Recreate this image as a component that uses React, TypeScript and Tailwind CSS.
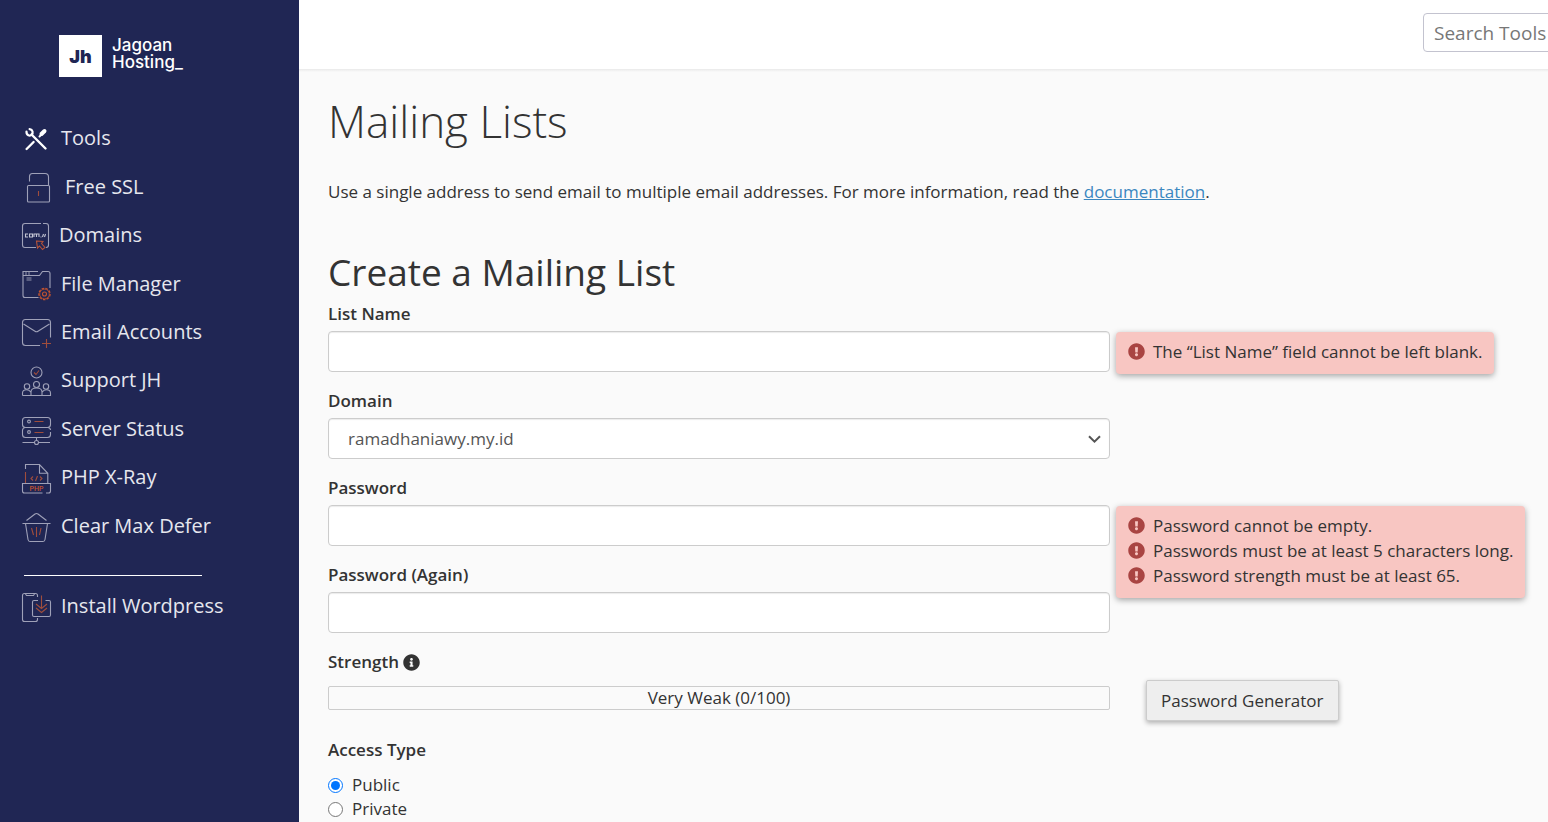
import type { ReactNode } from "react";
import { FaExclamationCircle, FaInfoCircle } from "react-icons/fa";

type NavItem = {
  label: string;
  icon: ReactNode;
};

const line = "#9fa1b8";
const accent = "#a04d3c";

function Icon({ width = 30, children }: { width?: number; children: ReactNode }) {
  return (
    <svg
      width={width}
      height="32"
      viewBox={`0 0 ${width} 32`}
      fill="none"
      stroke={line}
      strokeWidth="1.1"
      className="shrink-0 overflow-visible"
      aria-hidden="true"
    >
      {children}
    </svg>
  );
}

const navItems: NavItem[] = [
  {
    label: "Tools",
    icon: (
      <Icon>
        <g stroke="#fff" strokeLinecap="round">
          <path d="M9.5 12.5L23.5 26.5" strokeWidth="2.4" />
          <path d="M4.6 27L11.6 20" strokeWidth="2.4" />
          <path d="M17.5 14.5L19.5 12.5" strokeWidth="2" />
          <path d="M19.5 12L22.5 9" strokeWidth="4" />
          <path d="M4.5 9.5C4.3 13.5 8 14.6 9.6 12.6C11.4 11 11 7.6 7.6 7.2" strokeWidth="2.2" />
        </g>
      </Icon>
    ),
  },
  {
    label: "Free SSL",
    icon: (
      <Icon width={34}>
        <path d="M7.5 10.5V5.5Q7.5 2.5 10.5 2.5H23Q26.5 2.5 26.5 6V14" />
        <rect x="5.5" y="14.5" width="22" height="16.5" rx="1" />
        <path d="M16.5 20V25" stroke={accent} />
      </Icon>
    ),
  },
  {
    label: "Domains",
    icon: (
      <Icon width={28}>
        <path d="M19 4.5H3Q0.5 4.5 0.5 7V26Q0.5 28.5 3 28.5H14M21 4.5H24Q26.5 4.5 26.5 7V26Q26.5 28.5 24 28.5" />
        <path
          d="M6 15H3.5V18H6M7.5 15H10.5V18H7.5ZM12 18V15H17V18M14.5 15V18M18.5 18H19.5M20.5 18L21.5 15M22.5 18L23.5 15"
          stroke="#c3c5d4"
        />
        <path d="M14.5 22L21 22.5L19.5 24.5L23 28.5L20.5 30.5L17.5 27L15.5 29Z" stroke="#b5533a" />
      </Icon>
    ),
  },
  {
    label: "File Manager",
    icon: (
      <Icon>
        <path d="M16.5 29.5H3Q1 29.5 1 27.5V3.5H16M28 20V5.5Q28 3.5 26 3.5H20.5L17.5 7.5H1" />
        <path d="M4 3.5V7M7 3.5V7M4.5 10H9.5M4.5 12H9.5" strokeWidth="0.9" />
        <g stroke="#c4532f">
          <circle cx="22.5" cy="26" r="5.6" strokeDasharray="2.6 1.2" strokeWidth="1.3" />
          <circle cx="22.5" cy="26" r="4.8" strokeWidth="0.7" />
          <circle cx="22.5" cy="26" r="2" />
        </g>
      </Icon>
    ),
  },
  {
    label: "Email Accounts",
    icon: (
      <Icon>
        <path d="M18 29.5H3.5Q0.5 29.5 0.5 26.5V6.5Q0.5 3.5 3.5 3.5H25.5Q28.5 3.5 28.5 6.5V21.5" />
        <path d="M1.5 8L13 15.2Q14.5 16.2 16 15.2L27.5 8" />
        <path d="M24.5 23V32M20 27.5H29" stroke={accent} />
      </Icon>
    ),
  },
  {
    label: "Support JH",
    icon: (
      <Icon>
        <circle cx="14.5" cy="8.5" r="5.5" />
        <path d="M12 8.5L14 10.5L17 6.5" stroke={accent} />
        <circle cx="14.5" cy="20.5" r="3" />
        <circle cx="5" cy="22.5" r="2.7" />
        <circle cx="24" cy="22.5" r="2.7" />
        <path d="M0.5 31.5H28.5V29Q28.5 25.7 24.5 25.7Q21.5 25.7 20.3 28M0.5 31.5V29Q0.5 25.7 4.5 25.7Q7.5 25.7 8.7 28M9 31.5V28Q9 24 14.5 24Q20 24 20 28V31.5" />
      </Icon>
    ),
  },
  {
    label: "Server Status",
    icon: (
      <Icon>
        <rect x="0.5" y="4.5" width="28" height="10" rx="3" />
        <path d="M26 14.5Q28.5 15 28.5 17M28.5 19V21.5Q28.5 24.5 25.5 24.5H3.5Q0.5 24.5 0.5 21.5V17.5Q0.5 15 3 14.5" />
        <circle cx="7" cy="8.5" r="1.4" />
        <circle cx="7" cy="19" r="1.4" />
        <path d="M12.5 8.5H21.5M12.5 19.5H21.5" stroke={accent} />
        <path d="M14.5 24.5V27.5M0.5 29.5H12.5M16.5 29.5H28" />
        <circle cx="14.5" cy="29.5" r="2" />
      </Icon>
    ),
  },
  {
    label: "PHP X-Ray",
    icon: (
      <Icon>
        <path d="M3.5 8V3.5H17.5L25.8 12.3V22M17.5 3.5V12.3H25.8" />
        <path d="M3.5 11V22" stroke={accent} />
        <path d="M20.5 32H2.5Q0.5 32 0.5 30V22.5H28.5V30Q28.5 32 26.5 32H24" />
        <path d="M11 15.5L9 17.5L11 19.5M18 15.5L20 17.5L18 19.5M15.5 15L13.5 20" stroke={accent} />
        <text
          x="14.5"
          y="29.8"
          textAnchor="middle"
          fill="#c4532f"
          stroke="none"
          fontFamily="Roboto, sans-serif"
          fontSize="7"
          fontWeight="500"
        >
          PHP
        </text>
      </Icon>
    ),
  },
  {
    label: "Clear Max Defer",
    icon: (
      <Icon>
        <path d="M4.5 10.5L13 4Q14.5 3 16 4L24.5 10.5M0.5 13.5H28.5" />
        <path d="M3.5 13.5L6 29.5Q6.3 31.5 8 31.5H21Q22.7 31.5 23 29.5L25.5 13.5" />
        <path d="M9.5 18L11.5 25M14.5 17V27M19 18L17.5 25" stroke={accent} />
      </Icon>
    ),
  },
];

const installIcon = (
  <Icon>
    <path d="M15.5 7V5.5Q15.5 3.5 13.5 3.5H2.5Q0.5 3.5 0.5 5.5V29.5Q0.5 31.5 2.5 31.5H13.5Q15.5 31.5 15.5 29.5V28M3.5 4L4.5 5.5H11.5L12.5 4" />
    <path d="M16 10.5H12Q10.5 10.5 10.5 12V25Q10.5 26.5 12 26.5H27Q28.5 26.5 28.5 25V12Q28.5 10.5 27 10.5H23.5" />
    <path d="M19.5 5.5V18M14 14L19.5 18.5L25 14M14 18L19.5 22.5L25 18" stroke={accent} />
  </Icon>
);

function NavLink({ label, icon }: NavItem) {
  return (
    <a href="#" className="flex items-center gap-[9px] text-[20px] leading-7 text-[#e6e7ee]">
      {icon}
      {label}
    </a>
  );
}

function ErrorBox({ messages }: { messages: string[] }) {
  return (
    <ul
      role="alert"
      className="absolute top-px left-full ml-[6px] w-max rounded-[4px] bg-[#f8c6c2] px-3 pt-[7px] pb-[10px] shadow-[0_2px_6px_rgba(0,0,0,0.35)]"
    >
      {messages.map((m) => (
        <li key={m} className="flex h-[25px] items-center gap-2">
          <FaExclamationCircle className="size-[17px] text-[#a94442]" />
          {m}
        </li>
      ))}
    </ul>
  );
}

const fieldClass =
  "block h-[41px] w-full rounded-[4px] border border-[#ccc] bg-white px-[15px] shadow-[inset_0_1px_1px_rgba(0,0,0,0.08)]";
const labelClass = "block leading-6 font-semibold";

function TextField({
  id,
  label,
  type = "text",
  errors,
}: {
  id: string;
  label: string;
  type?: string;
  errors?: string[];
}) {
  return (
    <div className="mb-[17px]">
      <label htmlFor={id} className={labelClass}>
        {label}
      </label>
      <div className="relative mt-[5px]">
        <input id={id} type={type} className={fieldClass} />
        {errors && <ErrorBox messages={errors} />}
      </div>
    </div>
  );
}

export default function App() {
  return (
    <div className="flex min-h-screen overflow-hidden bg-[#fafafa] font-['Open_Sans',sans-serif] text-[17px] text-[#333]">
      {/* Sidebar */}
      <aside className="w-[299px] shrink-0 bg-[#202654]">
        <a href="#" className="mt-[35px] ml-[59px] flex items-center gap-[10px] text-white">
          <span className="flex h-[42px] w-[43px] items-center justify-center bg-white font-['Inter',sans-serif] text-[18px] font-black text-[#202654]">
            Jh
          </span>
          <span className="pb-1 font-['Inter',sans-serif] text-[17px] leading-[17px] font-medium">
            Jagoan
            <br />
            Hosting_
          </span>
        </a>
        <nav className="mt-[37px] pl-[22px]">
          <div className="grid h-[436px] auto-rows-fr">
            {navItems.map((item) => (
              <NavLink key={item.label} {...item} />
            ))}
          </div>
          <hr className="mt-[25px] ml-[2px] w-[178px] border-white" />
          <div className="mt-[14px]">
            <NavLink label="Install Wordpress" icon={installIcon} />
          </div>
        </nav>
      </aside>

      <div className="min-w-0 flex-1">
        {/* Top bar */}
        <header className="flex h-[69px] justify-end overflow-hidden bg-white pt-[13px]">
          <input
            type="search"
            aria-label="Search Tools"
            placeholder="Search Tools"
            className="-mr-[175px] h-[39px] w-[300px] shrink-0 rounded-[4px] border border-[#c3c3cf] bg-white px-[10px] text-[19px] placeholder:text-[#777]"
          />
        </header>
        <div className="h-[3px] bg-linear-to-b from-[#e9e9e9] to-[#fafafa]" />

        <main className="pr-[41px] pl-[29px]">
          <h1 className="pt-[19px] text-[44px] leading-[60px] font-light">Mailing Lists</h1>
          <p className="mt-[29px] leading-6">
            Use a single address to send email to multiple email addresses. For more information, read the{" "}
            <a href="#" className="text-[#3a87c0] underline">
              documentation
            </a>
            .
          </p>
          <h2 className="mt-[43px] text-[37px] leading-[50px] font-medium">Create a Mailing List</h2>

          <form className="mt-[5px] grid grid-cols-[2fr_1fr] gap-x-[6px]">
            <div>
              <TextField
                id="list-name"
                label="List Name"
                errors={["The “List Name” field cannot be left blank."]}
              />
              <div className="mb-[17px]">
                <label htmlFor="domain" className={labelClass}>
                  Domain
                </label>
                <div className="relative mt-[5px]">
                  <select id="domain" className={`${fieldClass} appearance-none pl-[19px] text-[#555]`}>
                    <option>ramadhaniawy.my.id</option>
                  </select>
                  <svg
                    className="pointer-events-none absolute top-[17px] right-[9px]"
                    width="13"
                    height="9"
                    viewBox="0 0 13 9"
                    fill="none"
                    stroke="#555"
                    strokeWidth="2"
                  >
                    <path d="M1 1.2L6.5 6.7L12 1.2" />
                  </svg>
                </div>
              </div>
              <TextField
                id="password"
                label="Password"
                type="password"
                errors={[
                  "Password cannot be empty.",
                  "Passwords must be at least 5 characters long.",
                  "Password strength must be at least 65.",
                ]}
              />
              <TextField id="password-again" label="Password (Again)" type="password" />
            </div>

            {/* Strength meter */}
            <div className="col-start-1">
              <div className="flex items-center gap-1 leading-6 font-semibold">
                Strength <FaInfoCircle className="size-[17px]" />
              </div>
              <div className="mt-3 flex h-6 items-center justify-center rounded-[2px] border border-[#ccc]">
                Very Weak (0/100)
              </div>
            </div>
            <div className="pt-[30px] pl-[30px]">
              <button
                type="button"
                className="block h-[41px] rounded-[2px] border border-[#ccc] bg-[#eee] px-[14px] whitespace-nowrap shadow-[0_2px_5px_rgba(0,0,0,0.3)]"
              >
                Password Generator
              </button>
            </div>

            <fieldset className="mt-[17px]">
              <legend className={labelClass}>Access Type</legend>
              <div className="mt-[11px]">
                <label className="flex h-6 items-center gap-[9px]">
                  <input type="radio" name="access" defaultChecked className="size-[15px]" />
                  Public
                </label>
                <label className="flex h-6 items-center gap-[9px]">
                  <input type="radio" name="access" className="size-[15px]" />
                  Private
                </label>
              </div>
            </fieldset>
          </form>
        </main>
      </div>
    </div>
  );
}
